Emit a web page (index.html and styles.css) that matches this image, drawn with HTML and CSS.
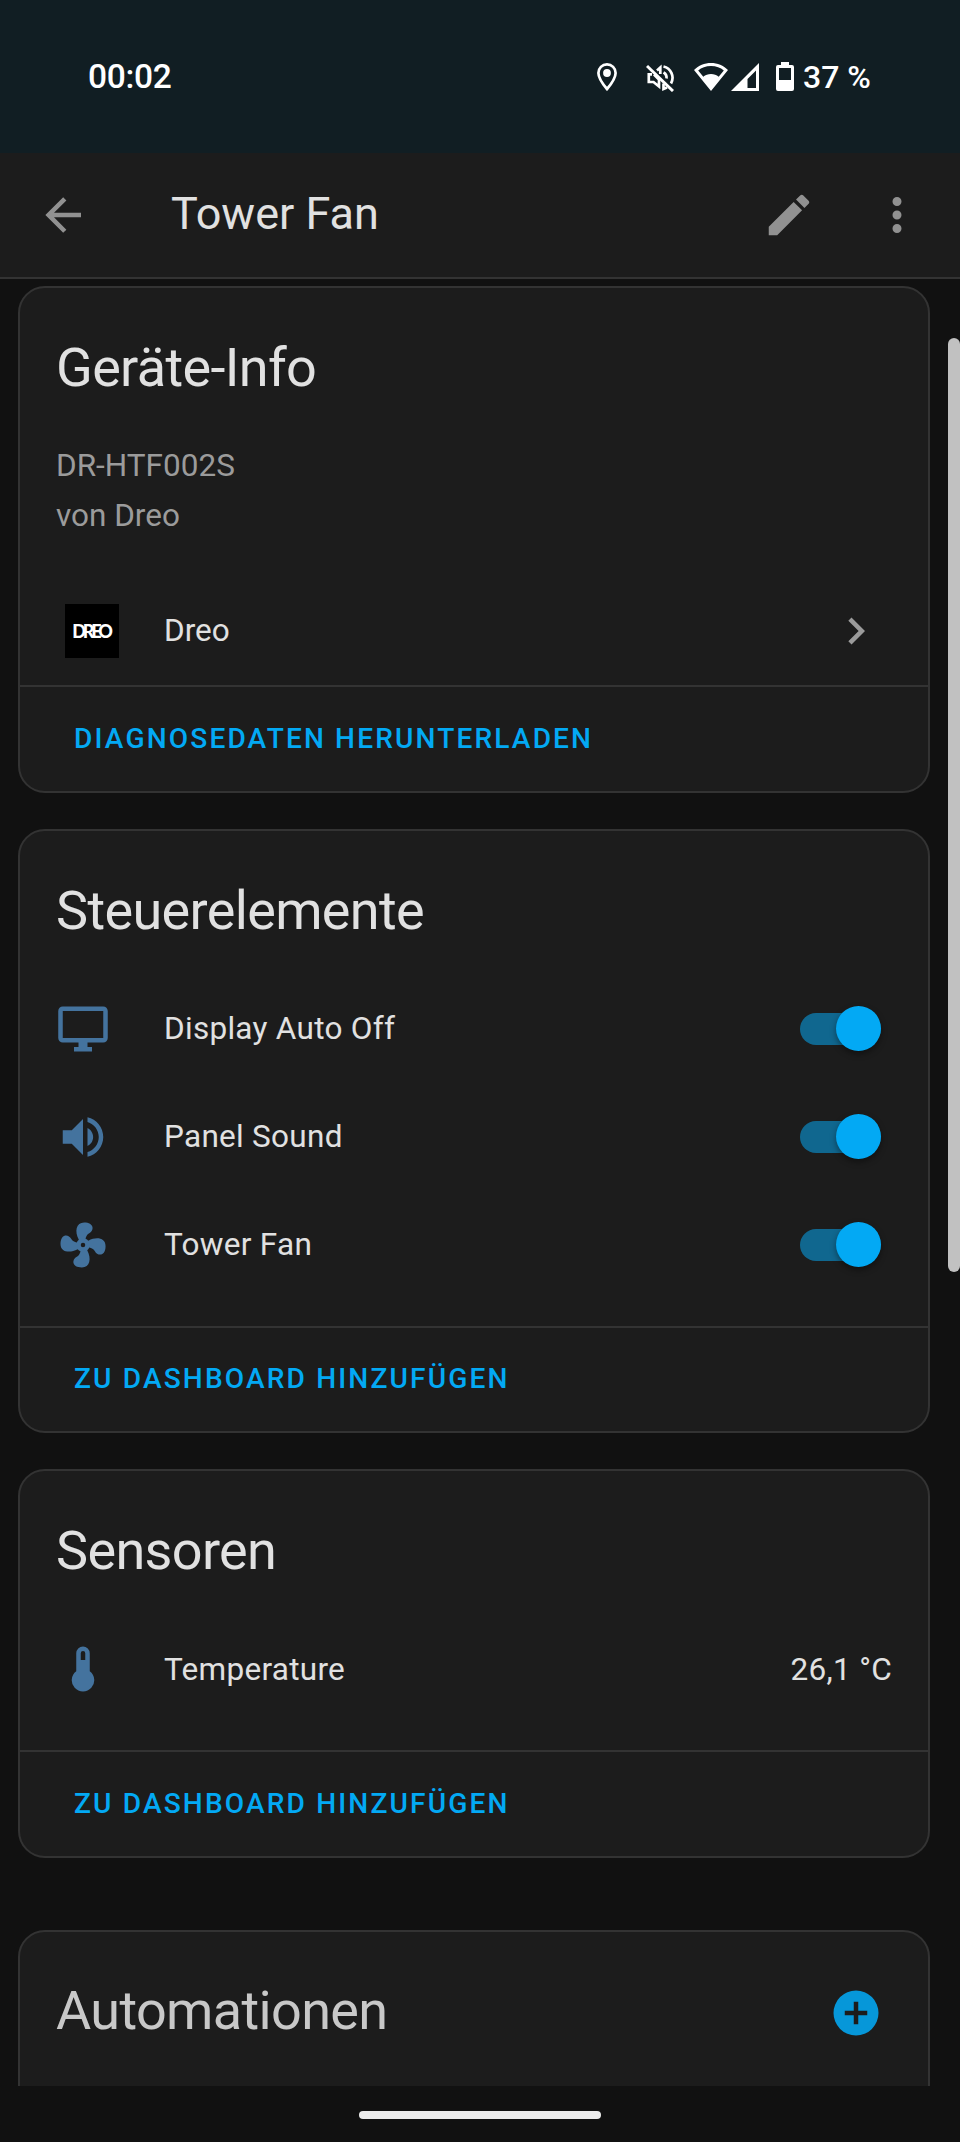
FILE: index.html
```html
<!DOCTYPE html>
<html lang="de">
<head>
<meta charset="utf-8">
<title>Tower Fan</title>
<link rel="stylesheet" href="styles.css">
</head>
<body>
<div class="screen">
  <div class="status">
    <span class="clock">00:02</span>
    <div class="status-icons">
      <svg class="s-pin" viewBox="0 0 20 28"><path d="M10 1.400C5.200 1.400 1.400 5.200 1.400 10C1.400 16 10 26 10 26S18.600 16 18.600 10C18.600 5.200 14.800 1.400 10 1.400Z" fill="none" stroke="#fff" stroke-width="2.700"/><circle cx="10" cy="10" r="3.900" fill="#fff"/></svg>
      <svg class="s-mute" viewBox="0 0 28 28"><g fill="none" stroke="#fff" stroke-width="2.700"><path d="M6 10.300H2.800V18H7.500L13 22.500V15.500L8 10.500"/><path d="M11 6.500L14.300 3.500V10"/><path d="M17.500 2.500A11.600 11.600 0 0 1 25 19.500"/><path d="M17.500 8.500A6 6 0 0 1 20.500 14.500M17.500 19.500V25L21 23.500"/><path d="M1 2L27 27" stroke-width="3"/></g></svg>
      <svg class="s-wifi" viewBox="0 0 34 28"><path fill-rule="evenodd" d="M17 0C23.500 0 29.500 2.600 34 7L17 28L0 7C4.500 2.600 10.500 0 17 0ZM17 3C11.800 3 7.500 4.700 4.200 7.500L9.300 13.700C11.500 11.800 14 11 17 11S22.500 11.800 24.700 13.700L29.800 7.500C26.500 4.700 22.200 3 17 3Z" fill="#fff"/></svg>
      <svg class="s-cell" viewBox="0 0 28 28"><path fill-rule="evenodd" d="M28 0V28H0ZM25 7.500L16.500 16V25H25Z" fill="#fff"/></svg>
      <svg class="s-batt" viewBox="0 0 18 29"><path fill-rule="evenodd" d="M5 0H13V3H16Q18 3 18 5V27Q18 29 16 29H2Q0 29 0 27V5Q0 3 2 3H5ZM3 6V18H15V6Z" fill="#fff"/></svg>
      <span class="percent">37 %</span>
    </div>
  </div>

  <header class="appbar">
    <svg class="icon" viewBox="0 0 24 24"><path d="M20,11V13H8L13.500,18.500L12.080,19.920L4.160,12L12.080,4.080L13.500,5.500L8,11H20Z"/></svg>
    <h1 class="page-title">Tower Fan</h1>
    <svg class="icon" viewBox="0 0 24 24"><path d="M20.710,7.040C21.100,6.650 21.100,6 20.710,5.630L18.370,3.290C18,2.900 17.350,2.900 16.960,3.290L15.120,5.120L18.870,8.870M3,17.250V21H6.750L17.810,9.930L14.060,6.180L3,17.250Z"/></svg>
    <svg class="icon" viewBox="0 0 24 24"><path d="M12,16A2,2 0 0,1 14,18A2,2 0 0,1 12,20A2,2 0 0,1 10,18A2,2 0 0,1 12,16M12,10A2,2 0 0,1 14,12A2,2 0 0,1 12,14A2,2 0 0,1 10,12A2,2 0 0,1 12,10M12,4A2,2 0 0,1 14,6A2,2 0 0,1 12,8A2,2 0 0,1 10,6A2,2 0 0,1 12,4Z"/></svg>
  </header>

  <main class="content">
    <section class="card info">
      <h2 class="card-title">Geräte-Info</h2>
      <div class="device"><div>DR-HTF002S</div><div>von Dreo</div></div>
      <div class="integration">
        <div class="brand"><span>DREO</span></div>
        <span class="label">Dreo</span>
        <svg class="icon chevron" viewBox="0 0 24 24"><path d="M8.590,16.580L13.170,12L8.590,7.410L10,6L16,12L10,18L8.590,16.580Z"/></svg>
      </div>
      <div class="actions"><span>DIAGNOSEDATEN HERUNTERLADEN</span></div>
    </section>

    <section class="card controls">
      <h2 class="card-title">Steuerelemente</h2>
      <div class="rows">
        <div class="row">
          <svg class="icon entity" viewBox="0 0 24 24"><path d="M21,16H3V4H21M21,2H3C1.890,2 1,2.890 1,4V16A2,2 0 0,0 3,18H10V20H8V22H16V20H14V18H21A2,2 0 0,0 23,16V4C23,2.890 22.100,2 21,2Z"/></svg>
          <span class="label">Display Auto Off</span><span class="switch"></span>
        </div>
        <div class="row">
          <svg class="icon entity" viewBox="0 0 24 24"><path d="M14,3.230V5.290C16.890,6.150 19,8.830 19,12C19,15.170 16.890,17.840 14,18.700V20.770C18,19.860 21,16.280 21,12C21,7.720 18,4.140 14,3.230M16.500,12C16.500,10.230 15.500,8.710 14,7.970V16C15.500,15.290 16.500,13.760 16.500,12M3,9V15H7L12,20V4L7,9H3Z"/></svg>
          <span class="label">Panel Sound</span><span class="switch"></span>
        </div>
        <div class="row">
          <svg class="icon entity" viewBox="0 0 24 24"><path d="M12,11A1,1 0 0,0 11,12A1,1 0 0,0 12,13A1,1 0 0,0 13,12A1,1 0 0,0 12,11M12.500,2C17,2 17.110,5.570 14.750,6.750C13.760,7.240 13.320,8.290 13.130,9.220C13.610,9.420 14.030,9.730 14.350,10.130C18.050,8.130 22.030,8.920 22.030,12.500C22.030,17 18.460,17.100 17.280,14.730C16.780,13.740 15.720,13.300 14.790,13.110C14.590,13.590 14.280,14 13.880,14.340C15.870,18.030 15.080,22 11.500,22C7,22 6.910,18.420 9.270,17.240C10.250,16.750 10.690,15.710 10.890,14.790C10.400,14.590 9.970,14.270 9.650,13.870C5.960,15.850 2,15.070 2,11.500C2,7 5.560,6.890 6.740,9.260C7.240,10.250 8.290,10.680 9.220,10.870C9.410,10.390 9.730,9.970 10.140,9.650C8.150,5.960 8.940,2 12.500,2Z"/></svg>
          <span class="label">Tower Fan</span><span class="switch"></span>
        </div>
      </div>
      <div class="actions"><span>ZU DASHBOARD HINZUFÜGEN</span></div>
    </section>

    <section class="card sensors">
      <h2 class="card-title">Sensoren</h2>
      <div class="rows">
        <div class="row">
          <svg class="icon entity" viewBox="0 0 24 24"><path d="M15,13V5A3,3 0 0,0 9,5V13A5,5 0 1,0 15,13M12,4A1,1 0 0,1 13,5V8H11V5A1,1 0 0,1 12,4Z"/></svg>
          <span class="label">Temperature</span><span class="value">26,1 °C</span>
        </div>
      </div>
      <div class="actions"><span>ZU DASHBOARD HINZUFÜGEN</span></div>
    </section>

    <section class="card automations">
      <h2 class="card-title">Automationen</h2>
      <svg class="icon add" viewBox="0 0 24 24"><path d="M17,13H13V17H11V13H7V11H11V7H13V11H17M12,2A10,10 0 0,0 2,12A10,10 0 0,0 12,22A10,10 0 0,0 22,12A10,10 0 0,0 12,2Z"/></svg>
    </section>
    <div class="scrollbar"></div>
  </main>

  <footer class="navbar"><div class="pill"></div></footer>
</div>
</body>
</html>
```
FILE: styles.css
```css
* { box-sizing: border-box; }
body { margin: 0; background: #111; }
.screen {
  width: 960px; height: 2142px; overflow: hidden;
  display: flex; flex-direction: column;
  font-family: Roboto, sans-serif; font-size: 31.5px; color: #e1e1e1;
  background: #111;
}
.status {
  flex: none; height: 153px; background: #111e23; color: #fff;
  display: flex; justify-content: space-between; align-items: flex-start;
  padding: 58px 88px 0 88px; font-weight: 500;
}
.clock { font-size: 33.5px; line-height: 38px; letter-spacing: -0.3px; }
.status-icons { display: flex; align-items: flex-start; }
.status-icons svg { display: block; }
.s-pin { width: 20px; height: 28px; margin: 5px 29px 0 0; }
.s-mute { width: 28px; height: 28px; margin: 6px 20px 0 0; }
.s-wifi { width: 34px; height: 28px; margin: 5px 3px 0 0; }
.s-cell { width: 28px; height: 28px; margin: 5px 17px 0 0; }
.s-batt { width: 18px; height: 29px; margin: 4px 9px 0 0; }
.percent { font-size: 32px; line-height: 38px; width: 69px; white-space: nowrap; }

.appbar {
  flex: none; height: 126px; background: #1c1c1c; border-bottom: 2px solid #333;
  display: flex; align-items: center; padding: 0 36px;
}
.icon { flex: none; display: block; width: 54px; height: 54px; fill: #919191; }
.page-title {
  margin: 0 auto 2px 81px; font-size: 45px; line-height: 60px; font-weight: 400;
}
.appbar .icon:last-child { margin-left: 54px; }

.content {
  position: relative; flex: none; height: 1807px; overflow: hidden;
  padding: 7px 30px 0 18px; display: flex; flex-direction: column; gap: 36px;
}
.card {
  flex: none; border: 2px solid #333; border-radius: 27px; background: #1c1c1c;
  display: flex; flex-direction: column;
}
.card-title {
  margin: 0; height: 152px; padding: 26px 36px 0;
  font-size: 54px; line-height: 108px; font-weight: 400; letter-spacing: -0.012em;
}
.device { height: 138px; padding: 1px 36px 0; line-height: 50px; color: #9b9b9b; }
.integration {
  height: 107px; padding: 0 45px 2px; display: flex; align-items: center;
}
.brand {
  width: 54px; height: 54px; background: #000; color: #fff; margin-right: 45px;
  display: flex; align-items: center; justify-content: center;
  font: 900 18px/20px Lato, sans-serif; letter-spacing: -3.1px;
}
.brand span { margin-right: 2px; }
.label { flex: 1; letter-spacing: 0.009em; white-space: nowrap; }
.integration .label { letter-spacing: 0; }
.value { letter-spacing: 0.009em; white-space: nowrap; }
.chevron { fill: #9b9b9b; }
.actions {
  flex: none; height: 106px; border-top: 2px solid #333; padding: 0 54px 2px;
  display: flex; align-items: center;
  font-size: 28.1px; font-weight: 500; letter-spacing: 2.14px; color: #03a9f4;
}
.rows { display: flex; flex-direction: column; gap: 18px; padding: 0 36px 37px; }
.row { height: 90px; display: flex; align-items: center; }
.entity { fill: #44739e; margin-right: 54px; }
.controls .entity { margin-top: 2px; }
.controls .actions { height: 105px; }
.sensors .card-title { height: 153px; }
.sensors .rows { padding-bottom: 36px; }
.switch {
  position: relative; width: 81px; height: 32px; border-radius: 16px;
  background: #10678f; margin: 2px 11px 0 0;
}
.switch::after {
  content: ""; position: absolute; right: 0; top: -7px;
  width: 45px; height: 45px; border-radius: 50%; background: #03a9f4;
  box-shadow: 0 3px 6px rgba(0, 0, 0, .4);
}
.automations {
  height: 200px; margin-top: 36px; flex-direction: row;
  justify-content: space-between; padding-right: 45px;
}
.automations .card-title { color: #c8c8c8; padding-top: 25px; }
.add { fill: #0697d9; margin-top: 54px; }
.scrollbar {
  position: absolute; top: 59px; right: 0; width: 12px; height: 934px;
  border-radius: 6px; background: #c1c1c1;
}
.navbar { flex: none; height: 56px; display: flex; justify-content: center; padding-top: 25px; }
.pill { width: 242px; height: 8px; border-radius: 4px; background: #ececec; }
```
